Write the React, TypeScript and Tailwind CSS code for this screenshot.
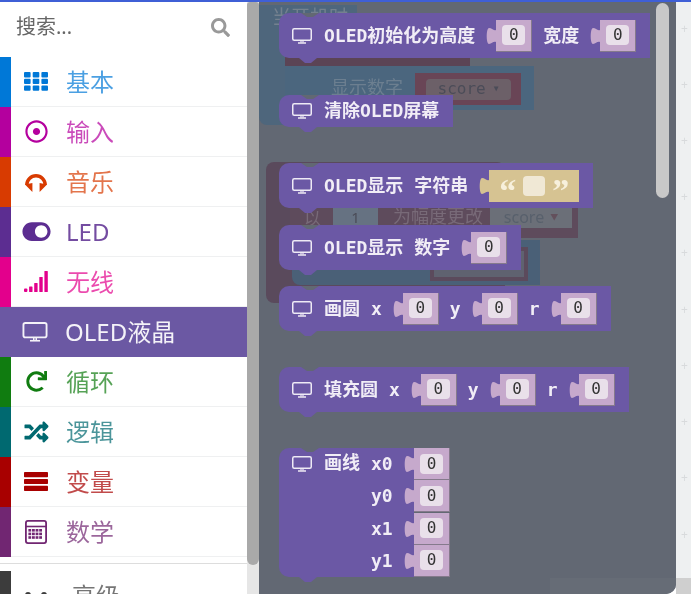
import React from "react";
import { FaRegDotCircle, FaToggleOn, FaRedo, FaRandom, FaSearch } from "react-icons/fa";

const UI = { fontFamily: '"Noto Sans","Noto Sans CJK SC",sans-serif' };
const MONO = { fontFamily: '"DejaVu Sans Mono","Noto Sans CJK SC",monospace' };

function Monitor({ className }: { className?: string }) {
  return (
    <svg viewBox="0 0 20 16" className={className} fill="none" stroke="currentColor">
      <rect x="0.75" y="0.75" width="18.5" height="11.5" rx="1.5" strokeWidth="1.5" />
      <path d="M9 12.5v2M11 12.5v2" strokeWidth="1.2" />
      <path d="M6 15h8" strokeWidth="1.3" />
    </svg>
  );
}

function Grid3() {
  return (
    <svg viewBox="0 0 24 19" className="h-[19px] w-[24px]" fill="currentColor">
      {[0, 6.7, 13.4].map((y) =>
        [0, 8.7, 17.4].map((x) => <rect key={`${x}-${y}`} x={x} y={y} width="6.6" height="5.4" rx="1" />)
      )}
    </svg>
  );
}

function Headphones() {
  return (
    <svg viewBox="0 0 24 20" className="h-[20px] w-[24px]">
      <path d="M2.8 13 A9.2 9.2 0 0 1 21.2 13" fill="none" stroke="currentColor" strokeWidth="3.4" />
      <path d="M1 12.5 L8.4 11 V20 Z M23 12.5 L15.6 11 V20 Z" fill="currentColor" />
    </svg>
  );
}

function Signal() {
  return (
    <svg viewBox="0 0 24 21" className="h-[21px] w-[24px]" fill="currentColor">
      <rect x="0" y="17.5" width="3.4" height="3.5" rx="1" />
      <rect x="5.1" y="15.5" width="3.4" height="5.5" rx="0.6" />
      <rect x="10.2" y="12" width="3.4" height="9" rx="0.6" />
      <rect x="15.3" y="6" width="3.4" height="15" rx="0.6" />
      <rect x="20.4" y="0" width="3.4" height="21" rx="0.6" />
    </svg>
  );
}

function Bars() {
  return (
    <svg viewBox="0 0 24 19" className="h-[19px] w-[24px]" fill="currentColor">
      <rect y="0" width="24" height="5.2" rx="0.8" />
      <rect y="6.9" width="24" height="5.2" rx="0.8" />
      <rect y="13.8" width="24" height="5.2" rx="0.8" />
    </svg>
  );
}

function Calc() {
  return (
    <svg viewBox="0 0 22 24" className="h-[24px] w-[22px]">
      <rect x="0.9" y="0.9" width="20.2" height="22.2" rx="2" fill="none" stroke="currentColor" strokeWidth="1.8" />
      <path d="M1 6.5h20" stroke="currentColor" strokeWidth="1.6" />
      {[9, 12.6, 16.2].map((y) =>
        [3.4, 7, 10.6, 14.2].map((x) => <rect key={`${x}-${y}`} x={x} y={y} width="2.8" height="2.6" fill="currentColor" />)
      )}
    </svg>
  );
}

const rows = [
  { label: "基本", bar: "bg-[#0078d7]", text: "text-[#0078d7]", op: "opacity-70", icon: <Grid3 /> },
  { label: "输入", bar: "bg-[#b4009e]", text: "text-[#b4009e]", op: "opacity-70", icon: <FaRegDotCircle className="h-[23px] w-[23px]" /> },
  { label: "音乐", bar: "bg-[#d83b01]", text: "text-[#d83b01]", op: "opacity-70", icon: <Headphones /> },
  { label: "LED", bar: "bg-[#5c2d91]", text: "text-[#5c2d91]", op: "opacity-85", icon: <FaToggleOn className="h-[25px] w-[29px]" /> },
  { label: "无线", bar: "bg-[#e3008c]", text: "text-[#e3008c]", op: "opacity-70", icon: <Signal /> },
];
const rows2 = [
  { label: "循环", bar: "bg-[#107c10]", text: "text-[#107c10]", op: "opacity-70", icon: <FaRedo className="h-[21px] w-[21px]" /> },
  { label: "逻辑", bar: "bg-[#006970]", text: "text-[#006970]", op: "opacity-70", icon: <FaRandom className="h-[24px] w-[25px]" /> },
  { label: "变量", bar: "bg-[#a80000]", text: "text-[#a80000]", op: "opacity-70", icon: <Bars /> },
  { label: "数学", bar: "bg-[#712672]", text: "text-[#712672]", op: "opacity-70", icon: <Calc /> },
];

function Row({ r }: { r: (typeof rows)[number] }) {
  return (
    <div className="flex h-[50px] shrink-0 items-stretch">
      <div className={`w-[11px] shrink-0 ${r.bar}`} />
      <div className={`flex flex-1 items-center border-b border-[#eff0f1] ${r.text}`}>
        <div className="flex w-[50px] justify-center">{r.icon}</div>
        <span className={`ml-[5px] text-[24px] leading-none ${r.op}`}>{r.label}</span>
      </div>
    </div>
  );
}

function Notches() {
  return (
    <>
      <svg viewBox="0 0 18 4" className="absolute left-[22px] top-0 h-[4px] w-[18px]">
        <path d="M0 0h18l-6 4h-6z" fill="#626873" />
      </svg>
      <svg viewBox="0 0 18 5" className="absolute left-[20px] top-full h-[5px] w-[18px]">
        <path d="M0 0h18l-6 5h-6z" fill="#6b58a5" />
      </svg>
    </>
  );
}

function Nub({ fill = "#c6a9cc" }: { fill?: string }) {
  return (
    <svg viewBox="0 0 10 18" className="h-[18px] w-[10px] shrink-0">
      <path d="M10 3 C7 4 6 1 3 1 C0 1 0 17 3 17 C6 17 7 14 10 15 Z" fill={fill} />
    </svg>
  );
}

function Field() {
  return (
    <div className="flex h-[32px] w-[36px] items-center justify-center border-r border-b border-[#857a8c] bg-[#c6a9cc]">
      <div className="flex h-[20px] w-[23px] items-center justify-center rounded-[4px] bg-[#e9e0ea] text-[16px] text-[#333]" style={MONO}>
        0
      </div>
    </div>
  );
}

function Plug() {
  return (
    <div className="flex items-center">
      <Nub />
      <Field />
    </div>
  );
}

function T({ children }: { children: React.ReactNode }) {
  return <span className="whitespace-nowrap text-[18px] font-bold leading-none text-[#f1edf6]">{children}</span>;
}

function Block({ mt, h = "h-[45px]", children }: { mt: string; h?: string; children: React.ReactNode }) {
  return (
    <div className={`relative flex w-fit items-center gap-[11px] rounded-l-[10px] bg-[#6b58a5] pl-[13px] pr-[14px] ${h} ${mt}`} style={MONO}>
      <Notches />
      <Monitor className="mr-[1px] h-[16px] w-[20px] shrink-0 text-[#eeeaf5]" />
      {children}
    </div>
  );
}

function Ghost({ className, children }: { className: string; children?: React.ReactNode }) {
  return <div className={`absolute ${className}`}>{children}</div>;
}

function LineRow({ first, label }: { first?: boolean; label: string }) {
  return (
    <div className="flex h-[32.25px] items-center">
      <div className="flex h-full w-[135px] items-center bg-[#6b58a5]">
        {first ? (
          <>
            <Monitor className="ml-[13px] h-[16px] w-[20px] shrink-0 text-[#eeeaf5]" />
            <span className="ml-[12px] w-[47px]"><T>画线</T></span>
          </>
        ) : (
          <span className="w-[92px]" />
        )}
        <span className="w-[33px] translate-y-[1px]"><T>{label}</T></span>
        <Nub />
      </div>
      <Field />
    </div>
  );
}

const plusY = [29, 85, 141, 197, 253, 310, 366, 422, 478, 535];

export default function App() {
  return (
    <div className="h-[599px] w-[691px] overflow-hidden bg-white blur-[0.5px]" style={UI}>
      <div className="h-[2px] bg-[#3f5fd6]" />
      <div className="flex h-[592px]">
        <div className="flex h-full w-[247px] flex-col overflow-hidden bg-white">
          <div className="flex h-[55px] shrink-0 items-center justify-between pb-[5px] pl-[16px] pr-[17px]">
            <span className="text-[20px] text-[#666]">搜索...</span>
            <FaSearch className="h-[19px] w-[19px] text-[#999]" />
          </div>
          {rows.map((r) => (
            <Row key={r.label} r={r} />
          ))}
          <div className="flex h-[50px] shrink-0 items-center bg-[#6b58a3] text-[#f4f2f8]">
            <Monitor className="ml-[22px] mr-[17px] h-[20px] w-[26px]" />
            <span className="text-[24px] leading-none">OLED液晶</span>
          </div>
          {rows2.map((r) => (
            <Row key={r.label} r={r} />
          ))}
          <div className="mt-[6px] h-[1px] shrink-0 bg-[#dddddd]" />
          <div className="mt-[7px] flex h-[40px] shrink-0 items-stretch">
            <div className="w-[11px] bg-[#3c3c3c]" />
            <div className="ml-[14px] flex items-start text-[#3c3c3c]">
              <div className="flex gap-[10px] pt-[21px]">
                <span className="h-[6px] w-[6px] rounded-full bg-[#3c3c3c]" />
                <span className="h-[6px] w-[6px] rounded-full bg-[#3c3c3c]" />
              </div>
              <span className="ml-[25px] pt-[13px] text-[24px] leading-none opacity-70">高级</span>
            </div>
          </div>
        </div>

        <div className="relative w-[12px] bg-[#e6e6e6]">
          <div className="absolute inset-x-0 top-0 h-[563px] rounded-b-[6px] rounded-t-[3px] bg-[#a9a9a9]" />
        </div>

        <div className="relative h-full w-[417px] overflow-hidden rounded-br-[10px] bg-[#626873]">
          <Ghost className="left-0 top-[3px] h-[120px] w-[26px] rounded-bl-[8px] bg-[#4e667c]" />
          <Ghost className="left-0 top-[3px] h-[20px] w-[98px] bg-[#4e667c]" />
          <Ghost className="left-[13px] top-[4px] whitespace-nowrap text-[19px] leading-[22px] text-[#74818f]">当开机时</Ghost>
          <Ghost className="left-[26px] top-[52px] h-[12px] w-[185px] bg-[#5b4455]" />
          <Ghost className="left-[26px] top-[64px] h-[44px] w-[249px] bg-[#4b667e]" />
          <Ghost className="left-[72px] top-[76px] whitespace-nowrap text-[18px] leading-none text-[#6c7f90]">显示数字</Ghost>
          <Ghost className="left-[156px] top-[71px] flex h-[32px] w-[106px] items-center justify-center bg-[#694556]">
            <span className="flex h-[21px] w-[85px] items-center justify-center gap-[8px] rounded-[4px] bg-[#6c6068] text-[16px] text-[#4b4c58]" style={MONO}>
              score <span className="text-[8px]">▼</span>
            </span>
          </Ghost>

          <Ghost className="left-[7px] top-[160px] h-[141px] w-[239px] rounded-[8px] bg-[#5a4a5c]" />
          <Ghost className="left-[31px] top-[206px] h-[30px] w-[288px] bg-[#5e4b5c]" />
          <Ghost className="left-[45px] top-[208px] text-[17px] leading-none text-[#786a78]">以</Ghost>
          <Ghost className="left-[74px] top-[204px] flex h-[22px] w-[45px] items-center justify-center bg-[#667282] text-[15px] text-[#4b4c58]" style={MONO}>1</Ghost>
          <Ghost className="left-[134px] top-[205px] whitespace-nowrap text-[18px] leading-none text-[#786a78]">为幅度更改</Ghost>
          <Ghost className="left-[231px] top-[204px] flex h-[22px] w-[82px] items-center justify-center gap-[6px] bg-[#6b6f78] text-[16px] text-[#58606c]" style={MONO}>
            score <span className="text-[8px] text-[#63505c]">▼</span>
          </Ghost>
          <Ghost className="left-[33px] top-[238px] h-[45px] w-[248px] rounded-bl-[8px] bg-[#4a6077]" />
          <Ghost className="left-[171px] top-[245px] h-[34px] w-[98px] border-[4px] border-[#5b4a5c] bg-[#5f6270]" />

          <div className="relative flex h-full flex-col pl-[20px]">
            <Block mt="mt-[11px]">
              <T>OLED初始化为高度</T>
              <Plug />
              <T>宽度</T>
              <Plug />
            </Block>
            <Block mt="mt-[37px]" h="h-[32px]">
              <T>清除OLED屏幕</T>
            </Block>
            <Block mt="mt-[36px]">
              <T>OLED显示</T>
              <T>字符串</T>
              <div className="flex items-center">
                <Nub fill="#d6c392" />
                <div className="flex h-[32px] w-[90px] items-center justify-center gap-[7px] bg-[#d6c392]">
                  <span className="pt-[10px] text-[34px] font-bold leading-[10px] text-[#f7f0dc]" style={{ fontFamily: '"Liberation Serif",serif' }}>“</span>
                  <div className="h-[20px] w-[22px] rounded-[4px] bg-[#f0e8d5]" />
                  <span className="pt-[10px] text-[34px] font-bold leading-[10px] text-[#f7f0dc]" style={{ fontFamily: '"Liberation Serif",serif' }}>”</span>
                </div>
              </div>
            </Block>
            <Block mt="mt-[17px]">
              <T>OLED显示</T>
              <T>数字</T>
              <Plug />
            </Block>
            <Block mt="mt-[16px]">
              <T>画圆</T>
              <T>x</T>
              <Plug />
              <T>y</T>
              <Plug />
              <T>r</T>
              <Plug />
            </Block>
            <Block mt="mt-[36px]">
              <T>填充圆</T>
              <T>x</T>
              <Plug />
              <T>y</T>
              <Plug />
              <T>r</T>
              <Plug />
            </Block>
            <div className="relative mt-[36px] w-fit overflow-visible" style={MONO}>
              <div className="overflow-hidden rounded-l-[10px]">
                <LineRow first label="x0" />
                <LineRow label="y0" />
                <LineRow label="x1" />
                <LineRow label="y1" />
              </div>
              <svg viewBox="0 0 18 5" className="absolute left-[20px] top-full h-[5px] w-[18px]">
                <path d="M0 0h18l-6 5h-6z" fill="#6b58a5" />
              </svg>
              <svg viewBox="0 0 18 4" className="absolute left-[22px] top-0 h-[4px] w-[18px]">
                <path d="M0 0h18l-6 4h-6z" fill="#626873" />
              </svg>
            </div>
          </div>

          <div className="absolute left-[397px] top-[1px] h-[195px] w-[13px] rounded-[7px] bg-[#c8c8c8]" />
          <div className="absolute bottom-0 left-[291px] h-[16px] w-[126px] bg-[#666c76]" />
        </div>

        <div className="relative flex-1 bg-[#eef0f1]">
          {plusY.map((y) => (
            <span key={y} className="absolute left-[5px] text-[12px] leading-none text-[#d8dadc]" style={{ top: y - 8 }}>+</span>
          ))}
          <div className="absolute bottom-0 left-0 h-[16px] w-full bg-[#cfcfcf]" />
        </div>
      </div>
    </div>
  );
}
